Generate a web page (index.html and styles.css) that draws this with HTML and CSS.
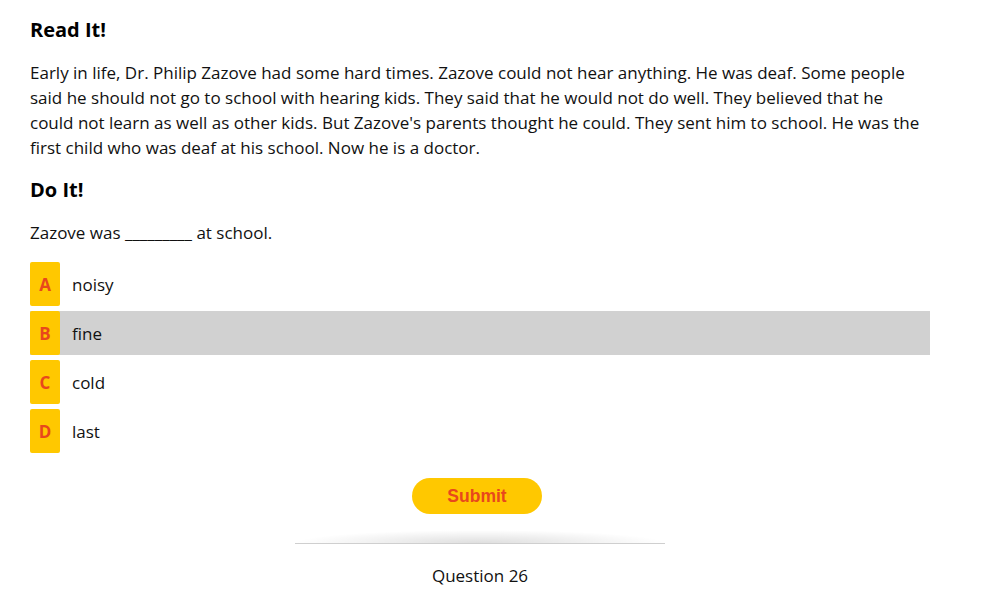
FILE: index.html
```html
<!DOCTYPE html>
<html lang="en">
<head>
    <meta charset="UTF-8" />
    <title>Question 26</title>
    <link rel="stylesheet" href="styles.css">
</head>
<body>
    <main class="quiz">
        <h2 class="section-title">Read It!</h2>
        <p class="passage">Early in life, Dr. Philip Zazove had some hard times. Zazove could not hear anything. He was deaf. Some people said he should not go to school with hearing kids. They said that he would not do well. They believed that he could not learn as well as other kids. But Zazove's parents thought he could. They sent him to school. He was the first child who was deaf at his school. Now he is a doctor.</p>

        <h2 class="section-title">Do It!</h2>
        <p class="prompt">Zazove was _________ at school.</p>

        <ul class="options">
            <li class="option"><span class="option-letter">A</span><span class="option-text">noisy</span></li>
            <li class="option selected"><span class="option-letter">B</span><span class="option-text">fine</span></li>
            <li class="option"><span class="option-letter">C</span><span class="option-text">cold</span></li>
            <li class="option"><span class="option-letter">D</span><span class="option-text">last</span></li>
        </ul>

        <div class="actions">
            <button class="submit-btn">Submit</button>
        </div>

        <div class="divider"></div>
        <div class="question-number">Question 26</div>
    </main>
</body>
</html>
```

FILE: styles.css
```css
* {
    box-sizing: border-box;
    margin: 0;
    padding: 0;
}

body {
    background: #fff;
    color: #111;
    font-family: 'Open Sans', sans-serif;
    font-size: 17px;
    line-height: 25px;
}

.quiz {
    width: 900px;
    margin-left: 30px;
    padding-top: 18px;
}

.section-title {
    font-size: 20px;
    font-weight: 700;
    line-height: 24px;
    color: #000;
}

.passage {
    margin-top: 18px;
    margin-bottom: 18px;
}

.prompt {
    margin-top: 18px;
}

.options {
    list-style: none;
    margin-top: 17px;
    display: flex;
    flex-direction: column;
    gap: 5px;
}

.option {
    display: flex;
    align-items: center;
    height: 44px;
}

.option.selected {
    background: #d1d1d1;
}

.option-letter {
    width: 30px;
    height: 44px;
    background: #ffc800;
    border-radius: 2px;
    color: #e8481c;
    font-size: 17px;
    font-weight: 700;
    display: flex;
    align-items: center;
    justify-content: center;
}

.option-text {
    margin-left: 12px;
}

.actions {
    display: flex;
    justify-content: center;
    margin-top: 25px;
    padding-right: 6px;
}

.submit-btn {
    width: 130px;
    height: 36px;
    border: none;
    border-radius: 18px;
    background: #ffc800;
    color: #e8481c;
    font-family: 'Liberation Sans', Arial, sans-serif;
    font-weight: 700;
    font-size: 17.5px;
    cursor: pointer;
}

.divider {
    width: 370px;
    height: 14px;
    margin: 16px auto 0;
    border-bottom: 1px solid #cfcfcf;
    background: radial-gradient(ellipse 50% 100% at 50% 100%, rgba(0, 0, 0, 0.13), rgba(0, 0, 0, 0));
}

.question-number {
    text-align: center;
    margin-top: 19px;
}
```
